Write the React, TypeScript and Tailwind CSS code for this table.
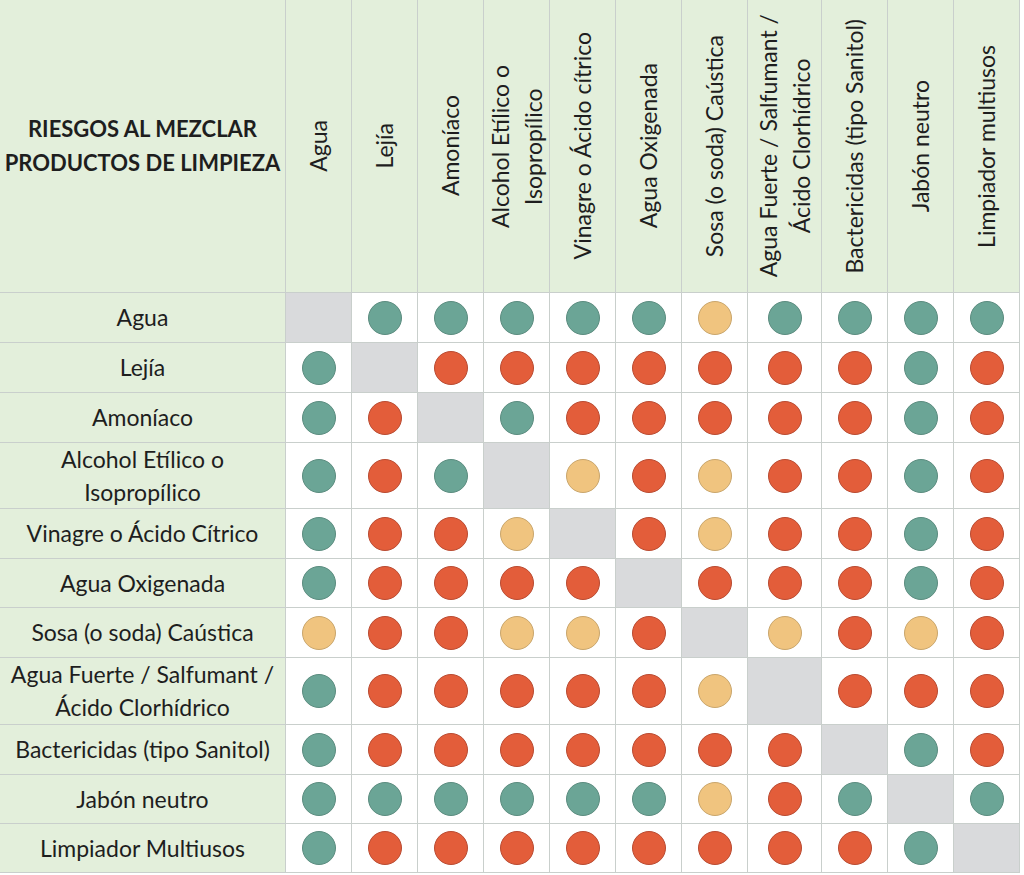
import React from 'react'

type Risk = 'g' | 'r' | 'y' | 'x'

const products = [
  { label: ['Agua'], head: ['Agua'] },
  { label: ['Lejía'], head: ['Lejía'] },
  { label: ['Amoníaco'], head: ['Amoníaco'] },
  { label: ['Alcohol Etílico o', 'Isopropílico'], head: ['Alcohol Etílico o', 'Isopropílico'] },
  { label: ['Vinagre o Ácido Cítrico'], head: ['Vinagre o Ácido cítrico'] },
  { label: ['Agua Oxigenada'], head: ['Agua Oxigenada'] },
  { label: ['Sosa (o soda) Caústica'], head: ['Sosa (o soda) Caústica'] },
  { label: ['Agua Fuerte / Salfumant /', 'Ácido Clorhídrico'], head: ['Agua Fuerte / Salfumant /', 'Ácido Clorhídrico'] },
  { label: ['Bactericidas (tipo Sanitol)'], head: ['Bactericidas (tipo Sanitol)'] },
  { label: ['Jabón neutro'], head: ['Jabón neutro'] },
  { label: ['Limpiador Multiusos'], head: ['Limpiador multiusos'] },
]

// one string per row, one letter per column (g safe, y caution, r danger, x same product)
const matrix: string[] = [
  'xgggggygggg',
  'gxrrrrrrrgr',
  'grxgrrrrrgr',
  'grgxyryrrgr',
  'grryxryrrgr',
  'grrrrxrrrgr',
  'yrryyrxyryr',
  'grrrrryxrrr',
  'grrrrrrrxgr',
  'ggggggyrgxg',
  'grrrrrrrrgx',
]

const rowHeights = ['h-[50px]', 'h-[50px]', 'h-[50px]', 'h-[66px]', 'h-[50px]', 'h-[49px]', 'h-[50px]', 'h-[67px]', 'h-[50px]', 'h-[49px]', 'h-[49px]']
const colWidths = ['w-[66px]', 'w-[66px]', 'w-[66px]', 'w-[66px]', 'w-[66px]', 'w-[66px]', 'w-[66px]', 'w-[74px]', 'w-[66px]', 'w-[66px]', 'w-[66px]']

const dotClass: Record<Exclude<Risk, 'x'>, string> = {
  g: 'bg-[#6ba596] border-[#5b8c7f]',
  r: 'bg-[#e35d3a] border-[#b94b32]',
  y: 'bg-[#f0c47f] border-[#c9a66c]',
}

function Cell({ risk, width }: { risk: Risk; width: string }): React.JSX.Element {
  if (risk === 'x') {
    return <div className={`${width} shrink-0 border-b border-r border-[#c9cfcc] bg-[#d9dadc]`} />
  }
  return (
    <div className={`${width} flex shrink-0 items-center justify-center border-b border-r border-[#c9cfcc] bg-white`}>
      <span className={`h-[34px] w-[34px] rounded-full border ${dotClass[risk]}`} />
    </div>
  )
}

export default function App(): React.JSX.Element {
  return (
    <div className="h-[875px] w-[1024px] overflow-hidden bg-white font-['Lato',sans-serif] text-[23px] text-[#1e1e1e]">
      {/* header row */}
      <div className="flex h-[293px]">
        <div className="flex w-[286px] shrink-0 items-center justify-center border-b border-r border-[#c9cfcc] bg-[#e3efdb] text-center text-[22px] font-bold leading-[34px]">
          <div>
            RIESGOS AL MEZCLAR
            <br />
            PRODUCTOS DE LIMPIEZA
          </div>
        </div>
        {products.map((p, i) => (
          <div
            key={i}
            className={`${colWidths[i]} flex shrink-0 items-center justify-center border-b border-r border-[#c9cfcc] bg-[#e3efdb]`}
          >
            <div className="rotate-180 whitespace-nowrap text-center leading-[33px] [writing-mode:vertical-rl]">
              {p.head.map((line, j) => (
                <div key={j}>{line}</div>
              ))}
            </div>
          </div>
        ))}
      </div>

      {/* body rows */}
      {products.map((p, r) => (
        <div key={r} className={`flex ${rowHeights[r]}`}>
          <div className="flex w-[286px] shrink-0 flex-col items-center justify-center whitespace-nowrap border-b border-r border-[#c9cfcc] bg-[#e3efdb] text-center leading-[33px]">
            {p.label.map((line, j) => (
              <div key={j}>{line}</div>
            ))}
          </div>
          {matrix[r].split('').map((c, i) => (
            <Cell key={i} risk={c as Risk} width={colWidths[i]} />
          ))}
        </div>
      ))}
    </div>
  )
}
